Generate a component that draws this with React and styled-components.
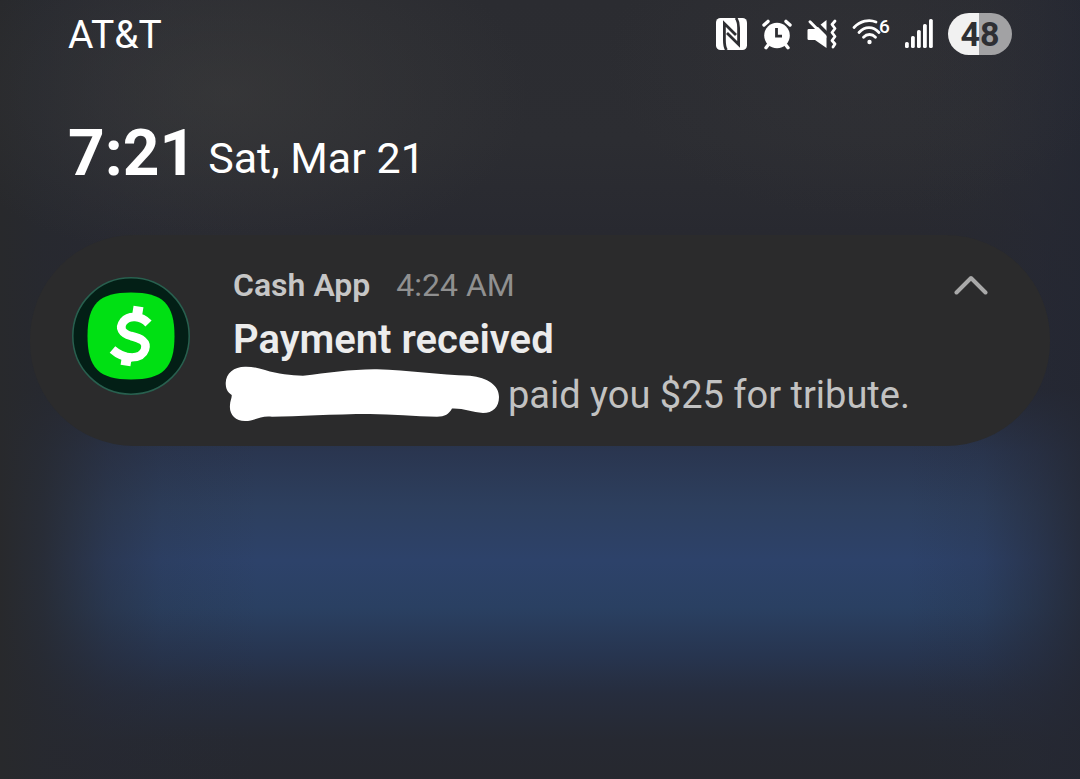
import React, { useState } from "react";
import styled, { createGlobalStyle } from "styled-components";

const GlobalStyle = createGlobalStyle`
  * {
    box-sizing: border-box;
  }
  body {
    margin: 0;
    background: #26282f;
    font-family: Roboto, "Liberation Sans", sans-serif;
  }
  h1, h2, p {
    margin: 0;
    font-weight: 400;
  }
`;

const Shade = styled.main`
  min-height: 100vh;
  color: #fff;
  background:
    radial-gradient(ellipse 28% 22% at 21% 12%, rgba(60, 60, 60, 0.6), transparent),
    radial-gradient(ellipse 24% 20% at 80% 8%, rgba(56, 56, 60, 0.3), transparent),
    linear-gradient(
      90deg,
      #28292c 0,
      rgba(39, 41, 47, 0.85) 4%,
      rgba(39, 41, 50, 0.4) 10%,
      rgba(39, 43, 54, 0.15) 15%,
      transparent 24%,
      transparent 84%,
      rgba(37, 41, 54, 0.15) 91%,
      rgba(37, 40, 52, 0.5) 96%,
      rgba(36, 39, 50, 0.8) 100%
    ),
    linear-gradient(
      #2b2c31 0,
      #2c2d32 18%,
      #282930 30%,
      #252833 50%,
      #2a3650 58%,
      #2d3f5e 65%,
      #2d426a 72%,
      #2a4062 78%,
      #273550 84%,
      #262d3e 89%,
      #262932 95%,
      #26282f 100%
    );
`;

const StatusBar = styled.div`
  display: flex;
  align-items: center;
  justify-content: space-between;
  height: 68px;
  padding: 0 68px;
`;

const Carrier = styled.span`
  padding-top: 2px;
  font-size: 39px;
  line-height: 48px;
`;

const StatusIcons = styled.div`
  display: flex;
  align-items: center;
  gap: 15px;
  svg {
    display: block;
  }
`;

const Battery = styled.span`
  width: 64px;
  border-radius: 21px;
  background: linear-gradient(90deg, #f1f1f1 ${p => p.$level}%, #a2a2a4 ${p => p.$level}%);
  color: #2e2f33;
  font-size: 34px;
  font-weight: 700;
  line-height: 42px;
  text-align: center;
`;

const ClockRow = styled.header`
  display: flex;
  align-items: flex-end;
  gap: 12px;
  padding: 49px 68px 44px;
`;

const Time = styled.h1`
  font-size: 64px;
  font-weight: 700;
  line-height: 74px;
`;

const DateText = styled.p`
  font-size: 43px;
  line-height: 66px;
`;

const Card = styled.article`
  display: flex;
  align-items: flex-start;
  gap: 43px;
  margin: 0 30px;
  padding: 26px 57px 27px 42px;
  border-radius: 104px;
  background: #2b2b2c;
`;

const AppLogo = styled.svg`
  flex: none;
  margin-top: 16px;
`;

const Content = styled.div`
  flex: 1;
  min-width: 0;
`;

const CardHeader = styled.div`
  display: flex;
  align-items: center;
  font-size: 32px;
  line-height: 48px;
`;

const AppName = styled.span`
  color: #c6c6c6;
  font-weight: 600;
`;

const SentAt = styled.time`
  margin-left: 26px;
  color: #909090;
`;

const Collapse = styled.button`
  display: flex;
  align-items: center;
  justify-content: center;
  width: 44px;
  height: 44px;
  margin-left: auto;
  padding: 0;
  border: 0;
  background: none;
  color: #a9a9a9;
  cursor: pointer;
`;

const Title = styled.h2`
  color: #ececec;
  font-size: 40px;
  font-weight: 600;
  line-height: 62px;
`;

const Message = styled.p`
  display: flex;
  align-items: center;
  gap: 8px;
  height: 48px;
  color: #c2c2c2;
  font-size: 38px;
  line-height: 48px;
`;

const Scribble = styled.svg`
  flex: none;
  margin-left: -8px;
`;

function NfcIcon() {
  return (
    <svg width="31" height="32" viewBox="0 0 31 32" fill="none">
      <rect width="31" height="32" rx="4.5" fill="#fff" />
      <g stroke="#2e2f33" strokeWidth="2.8">
        <path d="M10.5 32C8.5 29 8.4 26 8.4 22V5.5L20 17" />
        <path d="M20 0C22.2 3 22.6 6 22.6 10V26.5L11 15" />
      </g>
    </svg>
  );
}

function AlarmIcon() {
  return (
    <svg width="30" height="31" viewBox="0 0 30 31" fill="none" stroke="#fff" strokeLinecap="round">
      <circle cx="15" cy="16.5" r="12.8" fill="#fff" stroke="none" />
      <path d="M2 6 6 2.4M28 6 24 2.4" strokeWidth="3.4" />
      <path d="M6.5 25.5 4 28.7M23.5 25.5 26 28.7" strokeWidth="3.4" />
      <path d="M14.5 9V17.2H20" stroke="#2e2f33" strokeWidth="2.8" strokeLinecap="butt" />
    </svg>
  );
}

function MuteIcon() {
  return (
    <svg width="30" height="30" viewBox="0 0 30 30" fill="none">
      <path d="M1.8 10H8L19.5 1V29L8 21H1.8Q0.5 21 0.5 19.7V11.3Q0.5 10 1.8 10Z" fill="#fff" />
      <path d="M5.5 0 22 16.5" stroke="#2e2f33" strokeWidth="3.4" />
      <path d="M3 2.8 18 18" stroke="#fff" strokeWidth="3" strokeLinecap="round" />
      <path
        d="M28 2 25 5.5 28 9.5 25 13.5 28 17.5 25 21.5 28 25 26 28"
        stroke="#fff"
        strokeWidth="2.8"
        strokeLinecap="round"
        strokeLinejoin="round"
      />
    </svg>
  );
}

function WifiIcon() {
  return (
    <svg width="38" height="40" viewBox="0 -4 38 40" fill="none" stroke="#fff" strokeWidth="2.8" strokeLinecap="round">
      <path d="M2 9.5C8 3 17 1 24 4" />
      <path d="M7 14.5C13 8 21 8 27 14.5" />
      <path d="M11.5 19.2C15 15.6 20 15.6 23.5 19.2" />
      <circle cx="17.5" cy="24" r="2.2" fill="#fff" stroke="none" />
      <text x="27" y="15" fill="#fff" stroke="none" fontSize="19" fontWeight="500">6</text>
    </svg>
  );
}

function SignalIcon() {
  const bars = [6, 12, 18, 24, 29];
  return (
    <svg width="28" height="30" viewBox="0 0 28 30" fill="#fff">
      {bars.map((h, i) => (
        <rect key={h} x={i * 6} y={29 - h} width="3.8" height={h} rx="1.6" />
      ))}
    </svg>
  );
}

function CashLogo() {
  return (
    <AppLogo width="118" height="118" viewBox="0 0 118 118" fill="none">
      <circle cx="59" cy="59" r="58.2" fill="#031f16" stroke="#28604f" strokeWidth="1.5" />
      <path
        d="M59 15.5C91 15.5 102.5 27 102.5 59S91 102.5 59 102.5 15.5 91 15.5 59 27 15.5 59 15.5Z"
        fill="#00e013"
      />
      <g stroke="#fff">
        <path
          d="M76.5 46.5C69 38.5 57 38 51.5 44.5C46.5 51 50 56.5 59 59C69.5 61.5 75.5 65 73 72.5C69.5 82.5 53 83.5 40.5 72.5"
          strokeWidth="8.5"
        />
        <path d="M66.5 29.5 64.5 42M55.5 76 53.5 88.5" strokeWidth="10" />
      </g>
    </AppLogo>
  );
}

function App() {
  const [open, setOpen] = useState(true);

  return (
    <>
      <GlobalStyle />
      <Shade>
        <StatusBar>
          <Carrier>AT&amp;T</Carrier>
          <StatusIcons>
            <NfcIcon />
            <AlarmIcon />
            <MuteIcon />
            <WifiIcon />
            <SignalIcon />
            <Battery $level={48}>48</Battery>
          </StatusIcons>
        </StatusBar>
        <ClockRow>
          <Time>7:21</Time>
          <DateText>Sat, Mar 21</DateText>
        </ClockRow>
        <Card>
          <CashLogo />
          <Content>
            <CardHeader>
              <AppName>Cash App</AppName>
              <SentAt>4:24 AM</SentAt>
              <Collapse aria-label="Collapse" aria-expanded={open} onClick={() => setOpen(!open)}>
                <svg width="34" height="20" viewBox="0 0 34 20" fill="none" stroke="currentColor">
                  <path d="M2.5 17.5 17 3 31.5 17.5" strokeWidth="4" strokeLinecap="round" strokeLinejoin="round" />
                </svg>
              </Collapse>
            </CardHeader>
            <Title>Payment received</Title>
            {open && (
              <Message>
                <Scribble width="275" height="58" viewBox="0 0 275 58">
                  <path
                    d="M0.7 17C1 7 9 0.7 20 0.7C27 0.5 33 2 40 4C53 8 66 9.5 78 9.7C103 7 127 3 152 3.3C183 4 214 9 245 9.7C263 12 274 19 274 31C274 41 268 47 258 47C247 46 238 42 227 42.5C224 48 220 50.7 212 50.7C190 50.7 167 48 145 48C108 48 72 50.7 47 50.7C36 49 30 55 20 55C10 55 4 48 5 39C5 35 7 32 6.7 29C2 26 0.7 22 0.7 17Z"
                    fill="#fff"
                  />
                </Scribble>
                paid you $25 for tribute.
              </Message>
            )}
          </Content>
        </Card>
      </Shade>
    </>
  );
}

export default App;
